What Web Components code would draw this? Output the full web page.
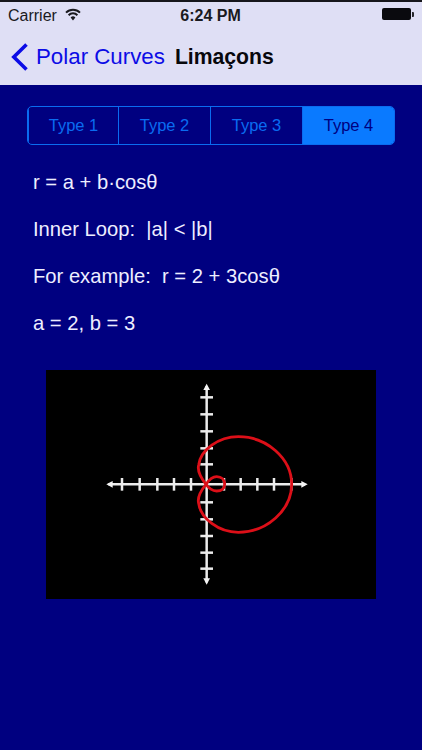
<!DOCTYPE html>
<html>
<head>
<meta charset="utf-8">
<title>Limaçons</title>
<style>
    html, body { margin: 0; height: 100%; }
    body { background: #000080; font-family: "Liberation Sans", Arial, sans-serif; }
</style>
</head>
<body>
<app-screen>
    <nav-header slot="header" back="Polar Curves" title-text="Limaçons"></nav-header>
    <type-tabs active="3"></type-tabs>
    <info-line>r = a + b·cosθ</info-line>
    <info-line>Inner Loop:&nbsp; |a| &lt; |b|</info-line>
    <info-line>For example:&nbsp; r = 2 + 3cosθ</info-line>
    <info-line>a = 2, b = 3</info-line>
    <polar-graph></polar-graph>
</app-screen>

<script>
/**
 * Outer frame: header on top, dark blue content below it.
 */
class AppScreen extends HTMLElement {
    constructor() {
        super();
        const shadow = this.attachShadow({ mode: "open" });
        shadow.innerHTML = `
            <style>
                :host { display: block; width: 422px; height: 750px; overflow: hidden; background: #000080; }
                main { display: flex; flex-direction: column; padding: 21px 27px 0 27px; }
            </style>
            <slot name="header"></slot>
            <main><slot></slot></main>
        `;
    }
}
customElements.define('app-screen', AppScreen);

class NavHeader extends HTMLElement {
    constructor() {
        super();
        const shadow = this.attachShadow({ mode: "open" });
        shadow.innerHTML = `
            <style>
                :host { display: block; height: 85px; background: #dfdff5; border-top: 2px solid #16161c; box-sizing: border-box; color: #000; }
                .status { position: relative; display: flex; align-items: center; height: 27px; padding: 0 8px; font-size: 16px; color: #1a1a1e; }
                .status svg.wifi { margin-left: 8px; margin-top: -2px; }
                .time { position: absolute; left: 0; right: 0; text-align: center; font-weight: bold; font-size: 16px; padding-right: 1px; }
                .battery { margin-left: auto; display: flex; align-items: center; margin-right: 0; margin-top: -3px; }
                .battery i { display: block; width: 29px; height: 12px; background: #0a0a0e; border-radius: 2px; }
                .battery b { display: block; width: 2px; height: 5px; background: #26262c; margin-left: 1px; border-radius: 0 1px 1px 0; }
                .bar { display: flex; align-items: center; height: 56px; padding: 0 0 0 11px; }
                .back { display: flex; align-items: center; color: #0c0ce6; font-size: 22.3px; }
                .back svg { margin-right: 7px; }
                .title { margin-left: 10px; font-size: 21.2px; font-weight: bold; color: #08080c; }
            </style>
            <div class="status">
                <span>Carrier</span>
                <svg class="wifi" width="16" height="13" viewBox="0 0 16 13">
                    <path d="M1 4.6 A10 10 0 0 1 15 4.6" fill="none" stroke="#1a1a1e" stroke-width="2"/>
                    <path d="M3.6 7.2 A6.2 6.2 0 0 1 12.4 7.2" fill="none" stroke="#1a1a1e" stroke-width="2"/>
                    <path d="M5.6 9.6 A3.3 3.3 0 0 1 10.4 9.6 L8 12.4 Z" fill="#1a1a1e"/>
                </svg>
                <span class="time">6:24 PM</span>
                <span class="battery"><i></i><b></b></span>
            </div>
            <div class="bar">
                <span class="back">
                    <svg width="18" height="28" viewBox="0 0 18 28">
                        <path d="M15.5 1.5 L2.8 14 L15.5 26.5" fill="none" stroke="#0c0ce6" stroke-width="3.6"/>
                    </svg>
                    <span id="back"></span>
                </span>
                <span class="title" id="title"></span>
            </div>
        `;
        shadow.getElementById('back').textContent = this.getAttribute('back');
        shadow.getElementById('title').textContent = this.getAttribute('title-text');
    }
}
customElements.define('nav-header', NavHeader);

class TypeTabs extends HTMLElement {
    constructor() {
        super();
        const shadow = this.attachShadow({ mode: "open" });
        shadow.innerHTML = `
            <style>
                :host { display: grid; grid-template-columns: 90px 92px 92px 1fr; width: 368px; height: 39px; margin-bottom: 14px; box-sizing: border-box; border: 1.5px solid #0a6cf0; border-radius: 5px; overflow: hidden; font-size: 16.5px; }
                div { display: flex; align-items: center; justify-content: center; color: #0a6cf0; border-left: 1.5px solid #0a6cf0; }
                div:first-child { border-left: 0; padding-right: 2px; }
                div.on { background: #0a7aff; color: #000080; }
            </style>
        `;
        const active = Number(this.getAttribute('active'));
        for (let i = 0; i < 4; i++) {
            const tab = document.createElement('div');
            tab.textContent = 'Type ' + (i + 1);
            if (i === active) tab.className = 'on';
            shadow.appendChild(tab);
        }
    }
}
customElements.define('type-tabs', TypeTabs);

class InfoLine extends HTMLElement {
    constructor() {
        super();
        const shadow = this.attachShadow({ mode: "open" });
        shadow.innerHTML = `
            <style>
                :host { display: block; height: 47px; line-height: 47px; padding-left: 6px; font-size: 20.2px; color: #eeeeff; white-space: nowrap; }
            </style>
            <slot></slot>
        `;
    }
}
customElements.define('info-line', InfoLine);

/**
 * Black picture with the two axes and the limacon, drawn in a
 * 690 unit box (the picture's axes are not quite evenly ticked).
 */
class PolarGraph extends HTMLElement {
    constructor() {
        super();
        const shadow = this.attachShadow({ mode: "open" });
        const ox = 350, oy = 343;
        const xTicks = [96, 149, 202, 252, 303, 402, 452, 502, 552, 604];
        const yTicks = [82, 133, 184, 235, 283, 397, 448, 498, 548, 596];
        let ticks = '';
        xTicks.forEach(x => { ticks += `<path d="M${x} ${oy - 19}V${oy + 19}"/>`; });
        yTicks.forEach(y => { ticks += `<path d="M${ox - 19} ${y}H${ox + 19}"/>`; });

        shadow.innerHTML = `
            <style>
                :host { display: block; width: 330px; height: 229px; margin: 23px 0 0 19px; background: #000; }
                svg { display: block; filter: blur(0.4px); }
            </style>
            <svg width="330" height="229" viewBox="-132 0 990 687">
                <g stroke="#ececec" stroke-width="7.5" fill="none">
                    <path d="M55 ${oy}H645"/>
                    <path d="M${ox} 48V637"/>
                    ${ticks}
                </g>
                <g fill="#f4f4f4">
                    <path d="M49 ${oy}l19 -10v20z"/>
                    <path d="M653 ${oy}l-19 -10v20z"/>
                    <path d="M${ox} 41l-10 19h20z"/>
                    <path d="M${ox} 644l-10 -19h20z"/>
                </g>
                <path d="M348 343 C330 320 322 300 326 285 C332 240 385 200 445 200 C530 200 605 265 605 343
                         C605 420 530 487 445 487 C385 487 332 445 326 400 C322 385 330 365 348 343
                         C358 358 370 363 380 363 C395 363 404 355 404 343 C404 330 395 320 380 320 C368 320 358 328 348 343 Z"
                      fill="none" stroke="#dc0f18" stroke-width="8.5"/>
            </svg>
        `;
    }
}
customElements.define('polar-graph', PolarGraph);
</script>
</body>
</html>
